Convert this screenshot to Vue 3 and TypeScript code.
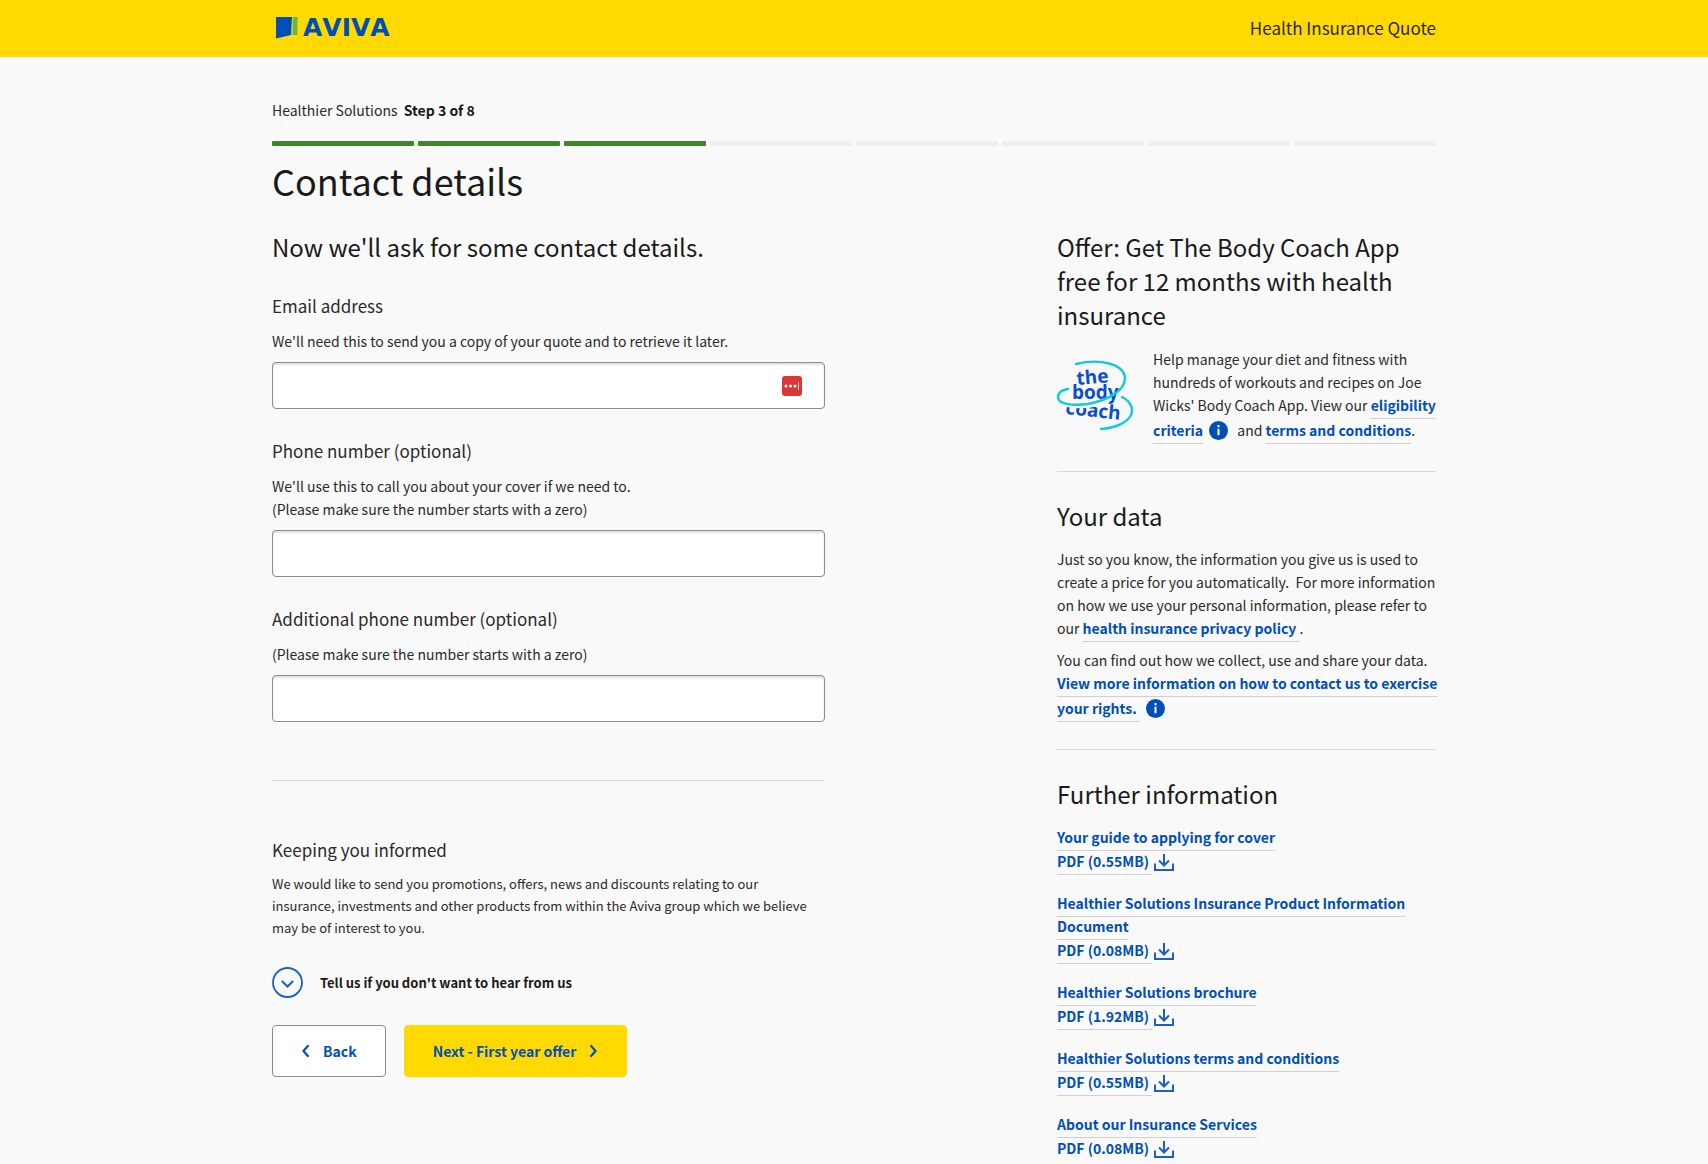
<script setup lang="ts">
import { reactive, ref } from 'vue'

interface Field {
  id: 'email' | 'phone' | 'altPhone'
  label: string
  type: string
  help: string[]
  autofill?: boolean
}

interface Doc {
  title: string
  size: string
}

const totalSteps = 8
const currentStep = 3

const fields: Field[] = [
  {
    id: 'email',
    label: 'Email address',
    type: 'email',
    help: ["We'll need this to send you a copy of your quote and to retrieve it later."],
    autofill: true,
  },
  {
    id: 'phone',
    label: 'Phone number (optional)',
    type: 'tel',
    help: [
      "We'll use this to call you about your cover if we need to.",
      '(Please make sure the number starts with a zero)',
    ],
  },
  {
    id: 'altPhone',
    label: 'Additional phone number (optional)',
    type: 'tel',
    help: ['(Please make sure the number starts with a zero)'],
  },
]

const form = reactive({ email: '', phone: '', altPhone: '' })
const optOutOpen = ref(false)

const docs: Doc[] = [
  { title: 'Your guide to applying for cover', size: '0.55MB' },
  { title: 'Healthier Solutions Insurance Product Information Document', size: '0.08MB' },
  { title: 'Healthier Solutions brochure', size: '1.92MB' },
  { title: 'Healthier Solutions terms and conditions', size: '0.55MB' },
  { title: 'About our Insurance Services', size: '0.08MB' },
]
</script>

<template>
  <div class="page">
    <header class="topbar">
      <div class="container topbar-inner">
        <a class="brand" href="#">
          <svg class="brand-mark" width="22" height="22" viewBox="0 0 22 22" aria-hidden="true">
            <path d="M0 0h16l-1 18-15 3.500z" fill="#004fb6" />
            <path d="M16.500 0h5v18h-6z" fill="#6ab545" />
            <path d="M16.500 0h1l-1 18h-1z" fill="#c4d327" />
          </svg>
          <span class="brand-name">AVIVA</span>
        </a>
        <span class="topbar-title">Health Insurance Quote</span>
      </div>
    </header>

    <main class="container">
      <p class="step">Healthier Solutions <strong>Step {{ currentStep }} of {{ totalSteps }}</strong></p>
      <div class="progress">
        <span v-for="n in totalSteps" :key="n" class="segment" :class="{ done: n <= currentStep }"></span>
      </div>
      <h1>Contact details</h1>

      <div class="columns">
        <form class="form" @submit.prevent>
          <h2>Now we'll ask for some contact details.</h2>

          <div v-for="field in fields" :key="field.id" class="field">
            <label :for="field.id">{{ field.label }}</label>
            <div class="help">
              <p v-for="line in field.help" :key="line">{{ line }}</p>
            </div>
            <div class="control">
              <input :id="field.id" v-model="form[field.id]" :type="field.type" />
              <svg v-if="field.autofill" class="autofill" width="20" height="20" viewBox="0 0 20 20" aria-hidden="true">
                <rect width="20" height="20" rx="3" fill="#dc3636" />
                <circle cx="4" cy="10" r="1.500" fill="#fff" />
                <circle cx="8.500" cy="10" r="1.500" fill="#fff" />
                <circle cx="13" cy="10" r="1.500" fill="#fff" />
                <path d="M16.500 6v8" stroke="#f6c4c4" stroke-width="1" />
              </svg>
            </div>
          </div>

          <hr class="form-rule" />

          <h3>Keeping you informed</h3>
          <p class="informed">
            We would like to send you promotions, offers, news and discounts relating to our<br />
            insurance, investments and other products from within the Aviva group which we believe may be of
            interest to you.
          </p>

          <button class="disclosure" type="button" :aria-expanded="optOutOpen" @click="optOutOpen = !optOutOpen">
            <svg width="31" height="31" viewBox="0 0 31 31" fill="none" stroke="#1a5fc4" aria-hidden="true">
              <circle cx="15.500" cy="15.500" r="14.500" stroke-width="1.800" />
              <path d="M9.800 14l5.700 5.500 5.700-5.500" stroke-width="2" />
            </svg>
            Tell us if you don't want to hear from us
          </button>

          <div class="actions">
            <button class="btn back" type="button">
              <svg width="9" height="14" viewBox="0 0 9 14" fill="none" stroke="#004fb6" stroke-width="2.200" aria-hidden="true">
                <path d="M7.500 1.200L2.500 7l5 5.800" />
              </svg>
              Back
            </button>
            <button class="btn next" type="submit">
              Next - First year offer
              <svg width="9" height="14" viewBox="0 0 9 14" fill="none" stroke="#004fb6" stroke-width="2.200" aria-hidden="true">
                <path d="M1.500 1.200l5 5.800-5 5.800" />
              </svg>
            </button>
          </div>
        </form>

        <aside>
          <section class="block">
            <h2>Offer: Get The Body Coach App free for 12 months with health insurance</h2>
            <div class="offer">
              <svg class="coach" width="80" height="74" viewBox="0 0 80 74" role="img" aria-label="the body coach">
                <g class="coach-text" fill="#0b4fc9">
                  <text x="20" y="26" transform="rotate(-5 20 26)">the</text>
                  <text x="15" y="40">body</text>
                  <text x="8" y="55" transform="rotate(6 8 55)">coach</text>
                </g>
                <path d="M10 46.500c14 3 30 0 42-4" fill="none" stroke="#f9f9f9" stroke-width="3" />
                <g fill="none" stroke="#12cbd6" stroke-width="2.400" stroke-linecap="round">
                  <path d="M19 5C43-1 67 5 68 19c0 13-17 22-37 26C14 47 1 45 1 38c0-4 4-7 10-8" />
                  <path d="M65 38c8 4 12 11 9 18-4 8-16 13-30 14" />
                </g>
              </svg>
              <p>
                Help manage your diet and fitness with hundreds of workouts and recipes on Joe Wicks' Body
                Coach App. View our <a class="link" href="#">eligibility criteria</a>
                <svg class="info" width="19" height="19" viewBox="0 0 19 19" aria-hidden="true">
                  <circle cx="9.500" cy="9.500" r="9.500" fill="#004fb6" />
                  <path d="M9.500 4v2.200M9.500 7.800v6.400" stroke="#fff" stroke-width="2" />
                </svg>
                and <a class="link" href="#">terms and conditions</a>.
              </p>
            </div>
          </section>

          <section class="block">
            <h2>Your data</h2>
            <p class="data">
              Just so you know, the information you give us is used to create a price for you
              automatically.&nbsp; For more information on how we use your personal information, please refer to
              our <a class="link" href="#">health insurance privacy policy&nbsp;</a>.
            </p>
            <p>
              You can find out how we collect, use and share your data.
              <a class="link" href="#"><span class="keep">View more information on how to contact us to exercise</span> your rights.&nbsp;</a>
              <svg class="info" width="19" height="19" viewBox="0 0 19 19" aria-hidden="true">
                <circle cx="9.500" cy="9.500" r="9.500" fill="#004fb6" />
                <path d="M9.500 4v2.200M9.500 7.800v6.400" stroke="#fff" stroke-width="2" />
              </svg>
            </p>
          </section>

          <section class="block">
            <h2>Further information</h2>
            <ul class="docs">
              <li v-for="doc in docs" :key="doc.title">
                <a class="doc" href="#">
                  <span class="doc-line"><span class="link">{{ doc.title }}</span></span>
                  <span class="doc-size">
                    <span class="link">PDF ({{ doc.size }})&nbsp;</span>
                    <svg width="20" height="18" viewBox="0 0 20 18" fill="none" stroke="#1a5fc4" stroke-width="2" aria-hidden="true">
                      <path d="M1 9.500V16h18V9.500M10 0v11M5 6.500l5 5 5-5" />
                    </svg>
                  </span>
                </a>
              </li>
            </ul>
          </section>
        </aside>
      </div>
    </main>
  </div>
</template>

<style>
body {
  background: #f9f9f9;
}
</style>

<style scoped>
.page {
  font-family: 'Noto Sans CJK SC', 'Noto Sans', sans-serif;
  font-size: 14px;
  line-height: 23px;
  color: #2a2a2a;
}

.container {
  box-sizing: border-box;
  max-width: 1212px;
  margin: 0 auto;
  padding: 0 24px;
}

h1,
h2,
h3,
p,
ul {
  margin: 0;
  padding: 0;
}

.topbar {
  background: #ffd900;
}

.topbar-inner {
  display: flex;
  align-items: center;
  justify-content: space-between;
  height: 57px;
  padding-bottom: 2px;
}

.topbar-title {
  font-size: 17px;
}

.brand {
  display: flex;
  align-items: center;
  gap: 5px;
  padding-left: 4px;
  color: #004fb6;
  text-decoration: none;
}

.brand-name {
  font-family: 'DejaVu Sans', sans-serif;
  font-size: 25px;
  font-weight: 700;
  font-kerning: none;
}

.step {
  padding-top: 42px;
  white-space: pre-wrap;
}

.step strong {
  margin-left: 3px;
  color: #1a1a1a;
}

.progress {
  display: flex;
  gap: 4px;
  margin-top: 19px;
}

.segment {
  flex: 1;
  height: 5px;
  border-radius: 1px;
  background: #efefef;
}

.segment.done {
  background: #3d862b;
}

h1 {
  margin-top: 12px;
  font-size: 36px;
  line-height: 44px;
  font-weight: 400;
  color: #1a1a1a;
}

h2 {
  font-size: 24px;
  line-height: 34px;
  font-weight: 400;
  color: #1a1a1a;
}

.columns {
  display: grid;
  grid-template-columns: minmax(0, 553px) minmax(0, 379px);
  justify-content: space-between;
  margin-top: 28px;
}

.field {
  margin-top: 30px;
}

label,
h3 {
  display: block;
  font-size: 17px;
  line-height: 24px;
  font-weight: 400;
}

.help {
  margin-top: 12px;
}

.control {
  position: relative;
  margin-top: 9px;
}

.control input {
  display: block;
  box-sizing: border-box;
  width: 100%;
  height: 47px;
  padding: 0 12px;
  border: 1px solid #8c8c8c;
  border-radius: 4px;
  background: #fff;
  box-shadow: inset 0 2px 2px rgba(0, 0, 0, 0.12);
  font: inherit;
}

.autofill {
  position: absolute;
  top: 14px;
  right: 23px;
}

hr {
  height: 0;
  border: 0;
  border-top: 1px solid #d9d9d9;
}

.form-rule {
  margin: 58px 0 57px;
}

.informed {
  margin-top: 11px;
  font-size: 13px;
  line-height: 22px;
}

.disclosure {
  display: flex;
  align-items: center;
  gap: 17px;
  margin-top: 28px;
  padding: 0;
  border: 0;
  background: none;
  font: inherit;
  font-size: 13px;
  font-weight: 700;
  color: #1a1a1a;
}

.actions {
  display: flex;
  gap: 18px;
  margin-top: 27px;
}

.btn {
  display: flex;
  align-items: center;
  gap: 13px;
  box-sizing: border-box;
  height: 52px;
  padding: 0 28px;
  border: 1px solid #ffd900;
  border-radius: 4px;
  font: inherit;
  font-weight: 700;
  color: #004fb6;
}

.back {
  border-color: #8c8c8c;
  background: #fff;
}

.next {
  background: #ffd900;
}

.link {
  font-weight: 700;
  color: #004fb6;
  text-decoration: underline 1px #d0d0d0;
  text-decoration-skip-ink: none;
  text-underline-offset: 7px;
}

.keep {
  white-space: nowrap;
}

.block + .block {
  margin-top: 29px;
  padding-top: 27px;
  border-top: 1px solid #d9d9d9;
}

.block p {
  padding-top: 9px;
}

.offer {
  display: grid;
  grid-template-columns: 80px minmax(0, 1fr);
  column-gap: 16px;
}

.block .offer p {
  padding-top: 16px;
}

.coach {
  margin-top: 27px;
}

.coach-text {
  font-family: 'Open Sans', sans-serif;
  font-size: 19px;
  font-weight: 700;
}

.info {
  margin: 4px 6px 0 6px;
  vertical-align: -4px;
}

.block .data {
  padding-top: 15px;
}

.docs {
  list-style: none;
  padding-top: 15px;
}

.docs li + li {
  margin-top: 19px;
}

.doc {
  display: block;
  text-decoration: none;
}

.doc-line {
  display: block;
}

.doc-size {
  display: block;
  line-height: 24px;
}

.doc-size svg {
  margin-left: 2px;
  vertical-align: -5px;
}
</style>
